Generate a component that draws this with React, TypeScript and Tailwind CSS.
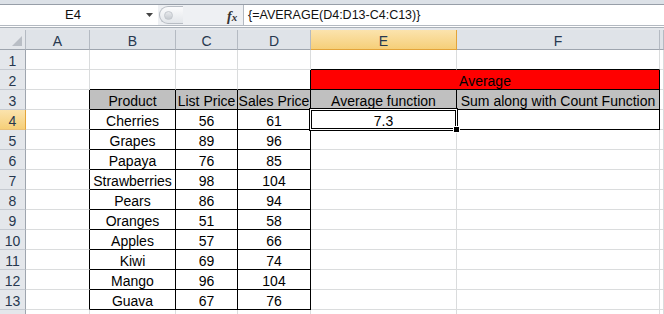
import React from 'react';

const cols = ['A', 'B', 'C', 'D', 'E', 'F', 'G'];
const colW = ['w-[64px]', 'w-[86px]', 'w-[62px]', 'w-[73px]', 'w-[146px]', 'w-[203px]', 'w-[4px]'];

const fruits: [string, number, number][] = [
  ['Cherries', 56, 61],
  ['Grapes', 89, 96],
  ['Papaya', 76, 85],
  ['Strawberries', 98, 104],
  ['Pears', 86, 94],
  ['Oranges', 51, 58],
  ['Apples', 57, 66],
  ['Kiwi', 69, 74],
  ['Mango', 96, 104],
  ['Guava', 67, 76],
];

type Cell = {
  text?: string;
  r?: boolean; // black right border
  b?: boolean; // black bottom border
  bg?: string;
};

function buildRow(row: number): Cell[] {
  const cells: Cell[] = cols.map(() => ({}));
  if (row === 1) {
    cells[4].b = true;
    cells[5].b = true;
  }
  if (row === 2) {
    cells[1].b = true;
    cells[2].b = true;
    cells[3].b = true;
    cells[3].r = true;
  }
  if (row >= 3 && row <= 13) {
    cells[0].r = true;
    cells[1].r = cells[1].b = true;
    cells[2].r = cells[2].b = true;
    cells[3].r = cells[3].b = true;
  }
  if (row === 3) {
    cells[1] = { ...cells[1], text: 'Product', bg: 'silver' };
    cells[2] = { ...cells[2], text: 'List Price', bg: 'silver' };
    cells[3] = { ...cells[3], text: 'Sales Price', bg: 'silver' };
    cells[4] = { text: 'Average function', r: true, b: true, bg: 'silver' };
    cells[5] = { text: 'Sum along with Count Function', r: true, b: true, bg: 'silver' };
  }
  if (row >= 4 && row <= 13) {
    const f = fruits[row - 4];
    cells[1].text = f[0];
    cells[2].text = String(f[1]);
    cells[3].text = String(f[2]);
  }
  if (row === 4) {
    cells[4] = { text: '7.3', r: true, b: true };
    cells[5] = { r: true, b: true };
  }
  return cells;
}

function DataCell({ cell, w, active }: { cell: Cell; w: string; active?: boolean }) {
  return (
    <div
      className={[
        'relative h-full shrink-0 border-r border-b text-center leading-[20px] whitespace-nowrap overflow-visible',
        w,
        cell.r ? 'border-r-black' : 'border-r-[#dadcdd]',
        cell.b ? 'border-b-black' : 'border-b-[#dadcdd]',
        cell.bg === 'silver' ? 'bg-[#c0c0c0]' : 'bg-white',
      ].join(' ')}
    >
      <span className="relative top-[1px]">{cell.text}</span>
      {active && (
        <>
          <div className="absolute -left-[2px] -top-[2px] w-[149px] h-[23px] border border-black z-10">
            <div className="w-full h-full border border-white">
              <div className="w-full h-full border border-black" />
            </div>
          </div>
          <div className="absolute -right-[3px] -bottom-[3px] w-[5px] h-[5px] bg-black outline outline-1 outline-white z-20" />
        </>
      )}
    </div>
  );
}

function RowHeader({ n, sel }: { n: number; sel?: boolean }) {
  return (
    <div
      className={[
        'w-[26px] h-full shrink-0 border-r border-b text-center leading-[20px] text-[#27384f]',
        sel
          ? 'bg-gradient-to-b from-[#fbe3ad] to-[#f6cf78] border-r-[#e3a43a] border-b-[#e9c079]'
          : 'bg-[#e4e7eb] border-r-[#9ea5ae] border-b-[#c5cad1]',
      ].join(' ')}
    >
      <span className="relative top-[1px]">{n < 14 ? n : ''}</span>
    </div>
  );
}

export default function App() {
  const rows = Array.from({ length: 14 }, (_, i) => i + 1);
  return (
    <div
      className="w-[664px] h-[314px] overflow-hidden bg-white text-[14px] text-black"
      style={{ fontFamily: '"Liberation Sans", Arial, sans-serif' }}
    >
      {/* Ribbon edge */}
      <div className="h-[4px] bg-[#dce1e7]" />

      {/* Formula bar */}
      <div className="h-[22px] flex border-t border-b border-t-[#979ea8] border-b-[#b3b9c1]">
        <div className="w-[158px] flex items-center bg-white relative">
          <span className="w-[146px] text-center text-[13px] text-[#111]">E4</span>
          <svg width="8" height="5" viewBox="0 0 8 5" className="absolute left-[146px] top-[8px]">
            <path d="M0 0 H7 L3.5 4 Z" fill="#444" />
          </svg>
        </div>
        <div className="w-[85px] flex items-center bg-[#eef0f3] relative">
          <div className="ml-[1px] w-[24px] h-[18px] rounded-l-full border border-r-0 border-[#b7bcc3] bg-gradient-to-b from-[#fbfbfc] to-[#e3e6ea] flex items-center pl-[4px]">
            <div className="w-[9px] h-[9px] rounded-full bg-gradient-to-b from-[#e8eaed] to-[#c6cad0] border border-[#c3c7cd]" />
          </div>
          <span
            className="absolute left-[69px] top-[1px] text-[14px] font-bold italic text-[#333]"
            style={{ fontFamily: '"Liberation Serif", serif' }}
          >
            f<span className="text-[11px]">x</span>
          </span>
        </div>
        <div className="flex-1 bg-white border-l border-l-[#b3b9c1] pl-[4px] flex items-center text-[12.5px] text-[#111]">
          {'{=AVERAGE(D4:D13-C4:C13)}'}
        </div>
      </div>
      <div className="h-[1px] bg-white" />
      <div className="h-[1px] bg-[#a9b0b8]" />
      <div className="h-[2px] bg-[#e4e7eb]" />

      {/* Column headers */}
      <div className="h-[20px] flex text-[#27384f]">
        <div className="w-[26px] h-full shrink-0 bg-[#e4e7eb] border-r border-b border-r-[#b4bac2] border-b-[#9ea5ae] relative">
          <svg width="10" height="10" viewBox="0 0 10 10" className="absolute right-[3px] bottom-[3px]">
            <path d="M10 0 V10 H0 Z" fill="#b9bec5" />
          </svg>
        </div>
        {cols.map((c, i) => (
          <div
            key={c}
            className={[
              'h-full shrink-0 border-r border-b text-center leading-[20px]',
              colW[i],
              c === 'E'
                ? 'bg-gradient-to-b from-[#fbe3ad] to-[#f6cf78] border-r-[#e3a43a] border-b-[#e3a43a]'
                : 'bg-[#dfe3e8] border-r-[#b4bac2] border-b-[#9ea5ae]',
            ].join(' ')}
          >
            <span className="relative top-[1px]">{c === 'G' ? '' : c}</span>
          </div>
        ))}
      </div>

      {/* Grid */}
      {rows.map((r) => {
        const cells = buildRow(r);
        return (
          <div key={r} className="h-[20px] flex">
            <RowHeader n={r} sel={r === 4} />
            {r === 2 ? (
              <>
                {cells.slice(0, 4).map((cell, i) => (
                  <DataCell key={i} cell={cell} w={colW[i]} />
                ))}
                <div className="w-[349px] h-full shrink-0 bg-[#ff0000] border-r border-b border-black text-center leading-[20px]">
                  <span className="relative top-[1px]">Average</span>
                </div>
                <DataCell cell={cells[6]} w={colW[6]} />
              </>
            ) : (
              cells.map((cell, i) => (
                <DataCell key={i} cell={cell} w={colW[i]} active={r === 4 && i === 4} />
              ))
            )}
          </div>
        );
      })}
    </div>
  );
}
